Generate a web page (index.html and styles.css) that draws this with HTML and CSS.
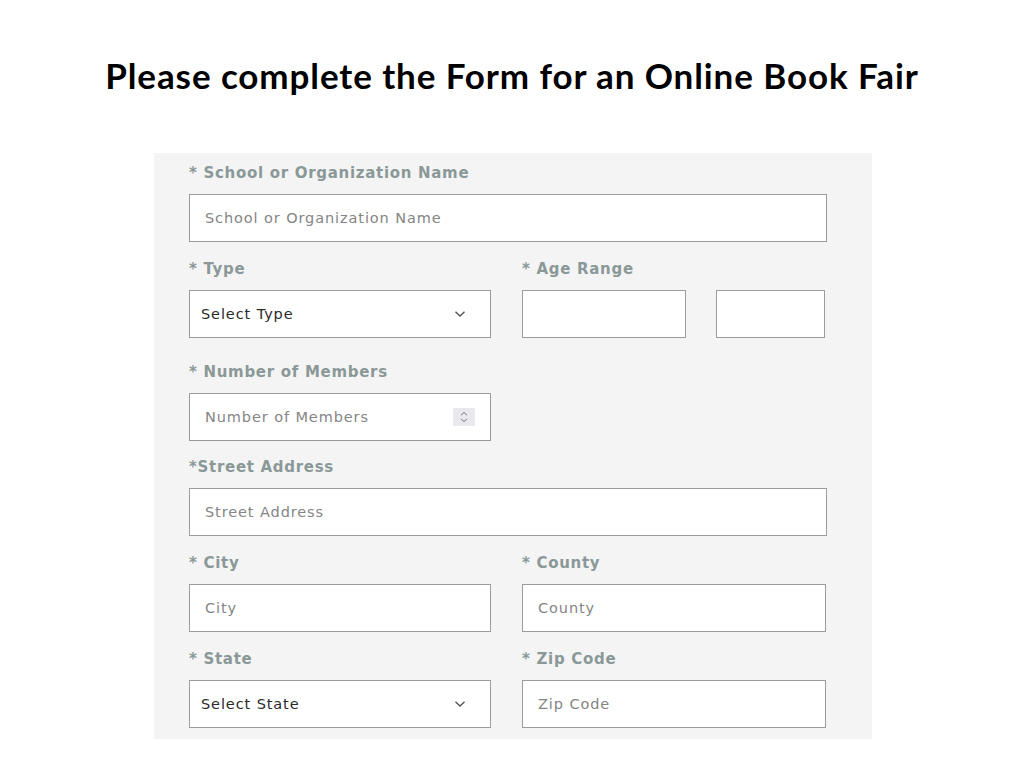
FILE: index.html
```html
<!DOCTYPE html>
<html lang="en">
<head>
  <meta charset="UTF-8">
  <title>Online Book Fair Form</title>
  <link rel="stylesheet" href="styles.css">
</head>
<body>
  <h1 class="title">Please complete the Form for an Online Book Fair</h1>

  <form class="fair-form">
    <div class="field">
      <label>* School or Organization Name</label>
      <div class="box"><span class="ph">School or Organization Name</span></div>
    </div>

    <div class="row">
      <div class="field">
        <label>* Type</label>
        <div class="box select">
          <span class="val">Select Type</span>
          <svg class="chev" width="12" height="8" viewBox="0 0 12 8"><path d="M1.5 1.8 6 6 10.5 1.8" fill="none" stroke="#555" stroke-width="1.4"/></svg>
        </div>
      </div>
      <div class="field">
        <label>* Age Range</label>
        <div class="ages">
          <div class="box age-from"></div>
          <div class="box age-to"></div>
        </div>
      </div>
    </div>

    <div class="row members">
      <div class="field">
        <label>* Number of Members</label>
        <div class="box select">
          <span class="ph">Number of Members</span>
          <span class="spin">
            <svg width="10" height="14" viewBox="0 0 10 14"><path d="M2 5.2 5 2.4 8 5.2M2 8.8 5 11.6 8 8.8" fill="none" stroke="#777" stroke-width="1"/></svg>
          </span>
        </div>
      </div>
    </div>

    <div class="field">
      <label>*Street Address</label>
      <div class="box"><span class="ph">Street Address</span></div>
    </div>

    <div class="row">
      <div class="field">
        <label>* City</label>
        <div class="box"><span class="ph">City</span></div>
      </div>
      <div class="field">
        <label>* County</label>
        <div class="box"><span class="ph">County</span></div>
      </div>
    </div>

    <div class="row">
      <div class="field">
        <label>* State</label>
        <div class="box select">
          <span class="val">Select State</span>
          <svg class="chev" width="12" height="8" viewBox="0 0 12 8"><path d="M1.5 1.8 6 6 10.5 1.8" fill="none" stroke="#555" stroke-width="1.4"/></svg>
        </div>
      </div>
      <div class="field last">
        <label>* Zip Code</label>
        <div class="box"><span class="ph">Zip Code</span></div>
      </div>
    </div>
  </form>
</body>
</html>
```

FILE: styles.css
```css
body {
  margin: 0;
  background: #fff;
  font-family: "DejaVu Sans", Inter, sans-serif;
}

.title {
  margin: 0;
  padding-top: 52px;
  height: 100px;
  box-sizing: border-box;
  text-align: center;
  font-family: Lato, "Open Sans", sans-serif;
  font-weight: 700;
  font-size: 35px;
  letter-spacing: 0.9px;
  line-height: 46px;
  color: #000;
}

.fair-form {
  width: 718px;
  margin: 53px 0 0 154px;
  box-sizing: border-box;
  padding: 10px 45px 0 35px;
  background: #f4f4f4;
  height: 586px;
}

.field {
  margin-bottom: 17px;
}

.field label {
  display: block;
  height: 20px;
  line-height: 20px;
  margin-bottom: 11px;
  font-size: 15px;
  font-weight: 700;
  letter-spacing: 0.7px;
  color: #8a9898;
}

.box {
  height: 48px;
  box-sizing: border-box;
  background: #fff;
  border: 1.5px solid #9b9b9b;
  display: flex;
  align-items: center;
  padding: 0 15px;
}

.ph {
  font-size: 14.5px;
  letter-spacing: 0.9px;
  color: #858585;
}

.val {
  font-size: 14.5px;
  letter-spacing: 0.9px;
  color: #2a2a2a;
  margin-left: -4px;
}

.select {
  justify-content: space-between;
}

.chev {
  margin-right: 9px;
}

.spin {
  width: 22px;
  height: 18px;
  background: #e8e8ed;
  display: flex;
  align-items: center;
  justify-content: center;
}

.row {
  display: grid;
  grid-template-columns: 302px 304px;
  column-gap: 31px;
}

.members {
  margin-top: 7px;
}

.members .field {
  margin-bottom: 16px;
}

.ages {
  display: flex;
  gap: 30px;
}

.age-from {
  width: 164px;
}

.age-to {
  width: 109px;
}

.last {
  margin-bottom: 0;
}
```
